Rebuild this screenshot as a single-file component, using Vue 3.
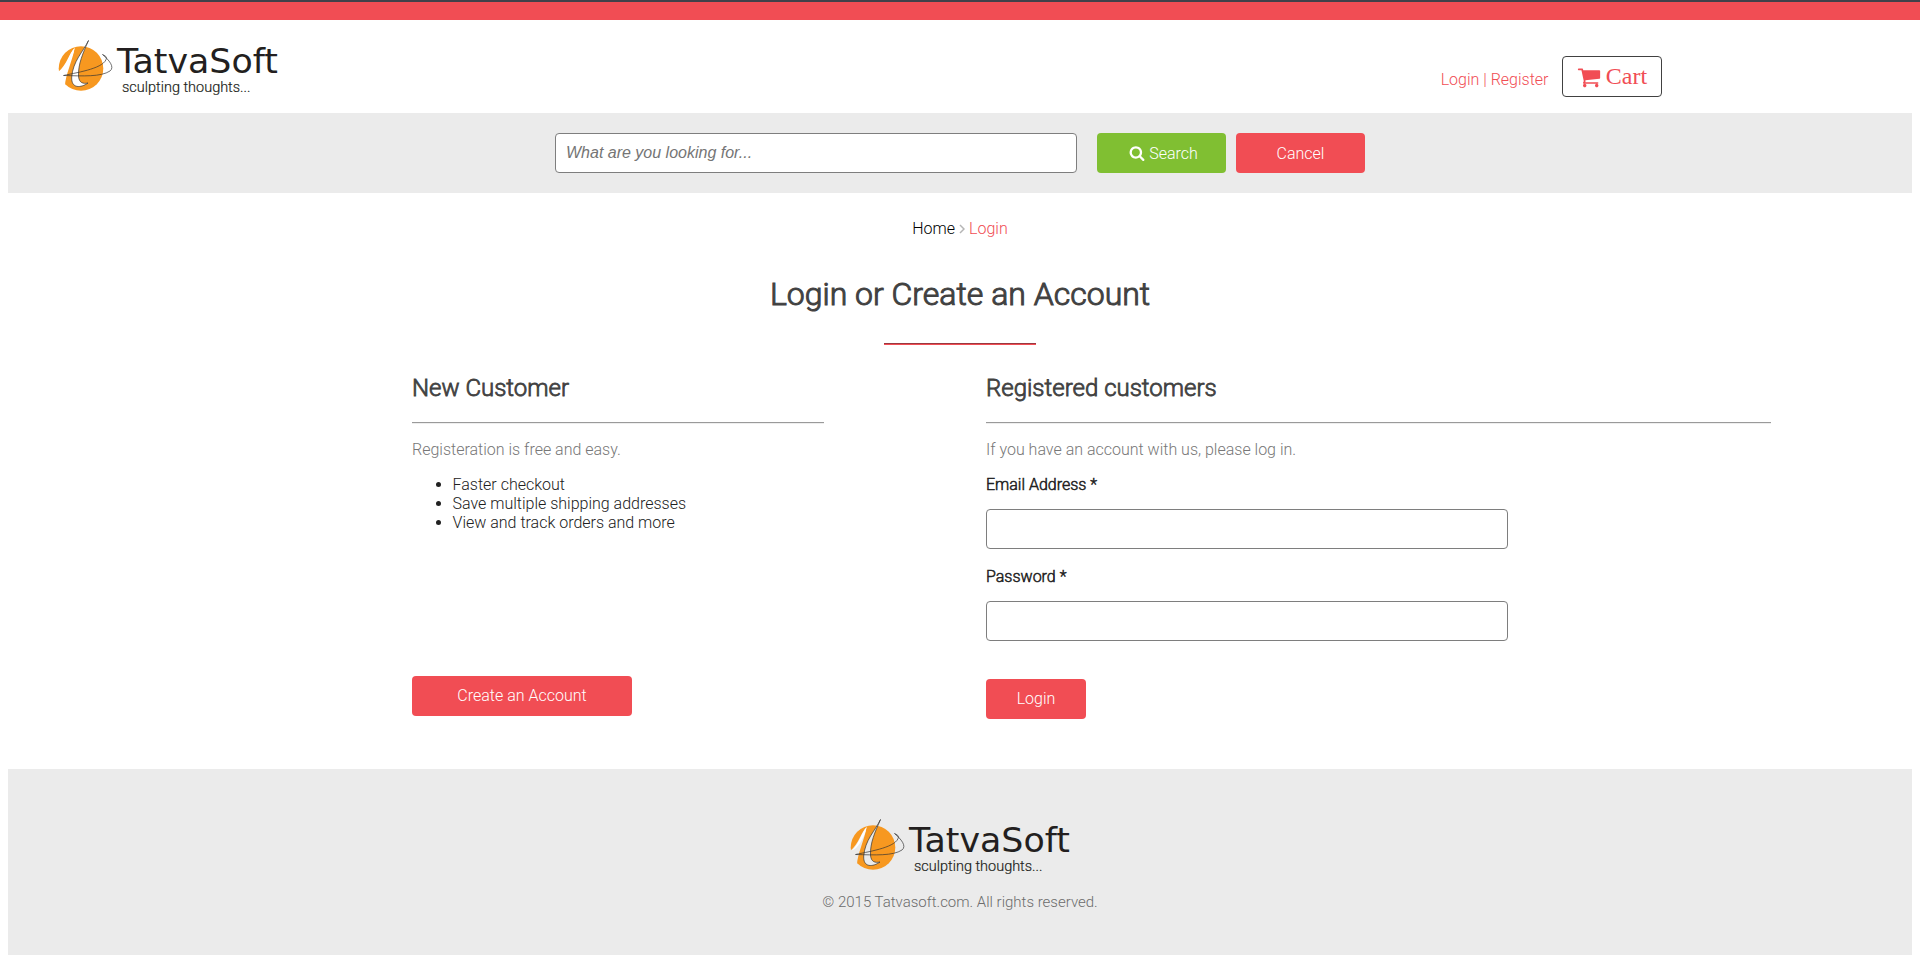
<script setup>
const perks = ['Faster checkout', 'Save multiple shipping addresses', 'View and track orders and more']
</script>

<template>
  <div class="page">
    <div class="topbar"></div>
    <header class="header">
      <svg class="logo" width="226" height="60" viewBox="0 0 226 60">
        <symbol id="brand" viewBox="0 0 226 60">
          <circle cx="25" cy="30.5" r="22.3" fill="#f79820" />
          <path d="M18.600 10C13 15 11 27 2 34C2 38 5 44 9 48C9 38 17 21 18.600 10Z" fill="var(--logo-bg)" />
          <path d="M18.700 10C13 16 12 26 4 33.500C9 32 16 22 18.700 10Z" fill="#fff" />
          <path d="M32.500 2.500C27 14 17 23 15.700 39C15 51 25 50 32 45C27 46 23 45 22.500 38C22 26 27 15 32.500 2.500Z" fill="var(--logo-bg)" stroke="#333" stroke-width=".7" />
          <path d="M7.500 37.500C24 34 49 30 50.500 20Q50.500 18 46.500 16.500C53 22 59 29 54 33C45 39 27 38 7.500 37.500" fill="none" stroke="#333" stroke-width=".7" />
          <text class="brand-name" x="61" y="35" textLength="161" lengthAdjust="spacingAndGlyphs">TatvaSoft</text>
          <text class="brand-line" x="66" y="53.500" textLength="128.500" lengthAdjust="spacingAndGlyphs">sculpting thoughts...</text>
        </symbol>
        <use href="#brand" />
      </svg>
      <div class="account">
        <a class="auth">Login | Register</a>
        <a class="cart">
          <svg width="24" height="24" viewBox="0 0 1664 1792"><path fill="currentColor" d="M640 1536q0 52-38 90t-90 38-90-38-38-90 38-90 90-38 90 38 38 90zm896 0q0 52-38 90t-90 38-90-38-38-90 38-90 90-38 90 38 38 90zm128-1088v512q0 24-16.500 42.500t-40.500 21.500l-1044 122q13 60 13 70 0 16-24 64h920q26 0 45 19t19 45-19 45-45 19h-1024q-26 0-45-19t-19-45q0-11 8-31.500t16-36 21.500-40 15.500-29.500l-177-823h-204q-26 0-45-19t-19-45 19-45 45-19h256q16 0 28.500 6.500t19.500 15.500 13 24.500 8 26 5.500 29.500 4.500 26h1201q26 0 45 19t19 45z" /></svg>
          <span>Cart</span>
        </a>
      </div>
    </header>
    <section class="search">
      <input class="field search-field" type="text" placeholder="What are you looking for..." />
      <button class="btn find">
        <svg width="16" height="16" viewBox="0 0 1664 1792"><path fill="currentColor" d="M1152 832q0-185-131.500-316.500t-316.500-131.500-316.500 131.500-131.500 316.500 131.500 316.500 316.500 131.500 316.500-131.500 131.500-316.500zm512 832q0 52-38 90t-90 38q-54 0-90-38l-343-342q-179 124-399 124-143 0-273.500-55.500t-225-150-150-225-55.500-273.500 55.500-273.500 150-225 225-150 273.500-55.500 273.500 55.500 225 150 150 225 55.500 273.500q0 220-124 399l343 343q37 37 37 90z" /></svg>
        <span>Search</span>
      </button>
      <button class="btn cancel">Cancel</button>
    </section>
    <nav class="crumbs">
      <span>Home</span>
      <svg width="6" height="10" viewBox="0 0 6 10"><path d="M1 1l4 4-4 4" fill="none" stroke="#b5b5b5" stroke-width="1.500" /></svg>
      <span class="current">Login</span>
    </nav>
    <h1>Login or Create an Account</h1>
    <div class="rule"></div>
    <main class="columns">
      <section class="new">
        <h2>New Customer</h2>
        <div class="line"></div>
        <p>Registeration is free and easy.</p>
        <ul><li v-for="perk in perks" :key="perk">{{ perk }}</li></ul>
        <button class="btn create">Create an Account</button>
      </section>
      <section class="registered">
        <h2>Registered customers</h2>
        <div class="line"></div>
        <p>If you have an account with us, please log in.</p>
        <label for="email">Email Address *</label>
        <input id="email" class="field" type="email" />
        <label for="password" class="second">Password *</label>
        <input id="password" class="field" type="password" />
        <button class="btn login">Login</button>
      </section>
    </main>
    <footer>
      <svg class="logo" width="226" height="60" viewBox="0 0 226 60"><use href="#brand" /></svg>
      <div class="copy">© 2015 Tatvasoft.com. All rights reserved.</div>
    </footer>
  </div>
</template>

<style>
body { background: #fff; }
</style>

<style scoped>
* { box-sizing: border-box; }
.page { height: 962px; overflow: hidden; font: 300 16px/19px Roboto, sans-serif; color: #212121; }
.topbar { height: 20px; background: #f14d54; border-top: 2px solid #41414a; }
.header { height: 93px; display: flex; justify-content: space-between; padding: 18px 258px 0 56px; }
.logo { --logo-bg: #fff; display: block; }
.brand-name { font: 400 34px "DejaVu Sans", sans-serif; fill: #231f20; }
.brand-line { font: 300 14.5px Roboto, sans-serif; fill: #231f20; stroke: #231f20; stroke-width: .2px; }
.account { display: flex; align-items: flex-start; padding-top: 18px; }
.auth { color: #f14d54; margin: 14px 13.5px 0 0; white-space: nowrap; }
.cart { width: 100px; height: 41px; border: 1px solid #414141; border-radius: 4px; display: flex; align-items: center; justify-content: center; gap: 5px; color: #f14d54; font: 400 24px/27px "Liberation Serif", serif; }
.search { height: 80px; margin: 0 8px; padding: 20px 0 0 547px; display: flex; background: #ebebeb; }
.field { display: block; width: 522px; height: 40px; border: 1px solid #7e7e7e; border-radius: 4px; padding: 0 10px; background: #fff; font: 16px "Liberation Sans", Arial, sans-serif; outline: none; }
.search-field::placeholder { font-style: italic; color: #757575; }
.btn { height: 40px; border: 0; border-radius: 4px; padding: 0; background: #f14d54; color: #fff; font: 300 16px/19px Roboto, sans-serif; display: flex; align-items: center; justify-content: center; gap: 4px; }
.find { width: 129px; margin: 0 10px 0 20px; padding-left: 4px; background: #80bf32; }
.cancel { width: 129px; }
.crumbs { margin-top: 26px; height: 19px; display: flex; align-items: center; justify-content: center; gap: 4px; color: #000; }
.crumbs .current { color: #f14d54; }
h1 { margin: 37px 0 0; text-align: center; font: 300 32px/38px Roboto, sans-serif; color: #414141; -webkit-text-stroke: 1px #414141; }
.rule { width: 152px; height: 2px; margin: 30px auto 0; background: #f14d54; border-top: 1px solid #9a3840; }
.columns { display: flex; height: 424px; padding: 29px 149px 0 412px; }
.new { width: 412px; margin-right: 162px; }
.registered { flex: 1; }
h2 { margin: 0; font: 300 24px/28px Roboto, sans-serif; color: #414141; -webkit-text-stroke: .8px #414141; }
.line { height: 2px; border-top: 1px solid #9a9a9a; background: #eee; margin: 20px 0 16px; }
p { margin: 0; color: #777; }
ul { margin: 16px 0 0; padding-left: 40.5px; }
.create { width: 220px; margin-top: 144px; padding-bottom: 1px; }
label { display: block; margin: 16px 0 15px; font-weight: 300; color: #212121; -webkit-text-stroke: .5px #212121; }
.second { margin-top: 18px; }
.login { width: 100px; margin-top: 38px; padding-bottom: 1px; }
footer { height: 186px; margin: 0 8px; padding-top: 48px; background: #ebebeb; color: #6c6c6c; text-align: center; }
footer .logo { --logo-bg: #ebebeb; margin-left: 840px; }
.copy { margin-top: 16px; font-size: 15px; }
</style>
